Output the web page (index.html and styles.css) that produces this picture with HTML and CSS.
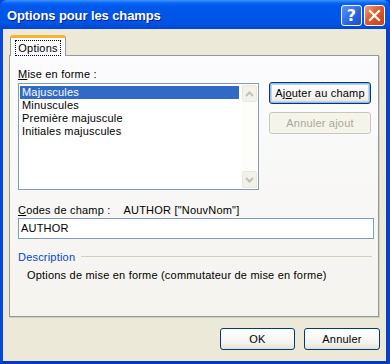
FILE: index.html
```html
<!DOCTYPE html>
<html lang="fr">
<head>
    <meta charset="UTF-8">
    <title>Options pour les champs</title>
    <link rel="stylesheet" href="styles.css">
</head>
<body>

<div class="window">
    <div class="titlebar">
        <span class="title">Options pour les champs</span>
        <div class="title-buttons">
            <div class="tbtn help">?</div>
            <div class="tbtn close">
                <svg width="13" height="13" viewBox="0 0 13 13">
                    <path d="M2 2 L11 11 M11 2 L2 11" stroke="#fff" stroke-width="2.2" stroke-linecap="square"/>
                </svg>
            </div>
        </div>
    </div>

    <div class="client">
        <div class="tabs">
            <div class="tab"><span class="focus">Options</span></div>
        </div>

        <div class="panel">
            <div class="label first"><u>M</u>ise en forme :</div>
            <div class="list-row">
                <div class="listbox">
                    <div class="items">
                        <div class="item selected">Majuscules</div>
                        <div class="item">Minuscules</div>
                        <div class="item">Première majuscule</div>
                        <div class="item">Initiales majuscules</div>
                    </div>
                    <div class="scrollbar">
                        <div class="sbtn">
                            <svg width="9" height="6" viewBox="0 0 9 6"><path d="M1 5 L4.5 1.5 L8 5" fill="none" stroke="#c3c1b5" stroke-width="2"/></svg>
                        </div>
                        <div class="track"></div>
                        <div class="sbtn">
                            <svg width="9" height="6" viewBox="0 0 9 6"><path d="M1 1 L4.5 4.5 L8 1" fill="none" stroke="#c3c1b5" stroke-width="2"/></svg>
                        </div>
                    </div>
                </div>
                <div class="side-buttons">
                    <div class="btn default wide">Aj<u>o</u>uter au champ</div>
                    <div class="btn disabled wide">Annuler ajout</div>
                </div>
            </div>

            <div class="label codes"><u>C</u>odes de champ :<span class="code-value">AUTHOR ["NouvNom"]</span></div>
            <div class="textbox">AUTHOR</div>

            <div class="group">
                <span class="group-title">Description</span>
                <span class="group-line"></span>
            </div>
            <div class="desc">Options de mise en forme (commutateur de mise en forme)</div>
        </div>

        <div class="footer">
            <div class="btn">OK</div>
            <div class="btn">Annuler</div>
        </div>
    </div>
</div>

</body>
</html>
```

FILE: styles.css
```css
body {
    margin: 0;
    padding: 0;
    background: #ece9d8;
    font-family: "Liberation Sans", Arial, sans-serif;
    font-size: 11px;
    letter-spacing: 0.2px;
    color: #000;
}
.window {
    width: 390px;
    height: 364px;
    box-sizing: border-box;
    display: flex;
    flex-direction: column;
    background: #0054e3;
    border-left: 3px solid #0848d8;
    border-right: 4px solid #0840c8;
    border-bottom: 3px solid #0838c0;
}
.titlebar {
    height: 29px;
    margin: 0 -4px 0 -3px;
    padding: 0 5px 0 7px;
    display: flex;
    align-items: center;
    justify-content: space-between;
    border-radius: 7px 7px 0 0;
    background: linear-gradient(#3d95ff 0px, #0a66f4 3px, #0058ee 6px, #0056e8 14px, #0055e5 22px, #0046d6 29px);
}
.title {
    color: #fff;
    font-weight: bold;
    font-size: 13px;
    letter-spacing: -0.1px;
    text-shadow: 1px 1px #0a1e8c;
    padding-top: 1px;
}
.title-buttons {
    display: flex;
    gap: 2px;
    padding-top: 1px;
}
.tbtn {
    width: 19px;
    height: 19px;
    border: 1px solid #fff;
    border-radius: 3px;
    display: flex;
    align-items: center;
    justify-content: center;
    color: #fff;
}
.help {
    background: linear-gradient(135deg, #5b93f8, #2a63de 60%, #1d4fc8);
    font-family: "DejaVu Sans", sans-serif;
    font-weight: bold;
    font-size: 16px;
}
.close {
    background: linear-gradient(135deg, #f0a080, #e05a2a 45%, #c8401a);
}
.client {
    flex: 1;
    background: #ece9d8;
    display: flex;
    flex-direction: column;
    padding: 7px 7px 0 6px;
}
.tabs {
    display: flex;
    padding-left: 1px;
    position: relative;
    z-index: 1;
    margin-bottom: -1px;
}
.tab {
    width: 54px;
    border: 1px solid #919b9c;
    border-bottom: none;
    border-top: 3px solid #f8b232;
    border-radius: 3px 3px 0 0;
    background: #fcfcfe;
    display: flex;
    align-items: center;
    justify-content: center;
    margin-top: -1px;
    height: 18px;
}
.focus {
    border: 1px dotted #000;
    padding: 1px 2px;
    margin-top: 1px;
}
.panel {
    height: 262px;
    box-sizing: border-box;
    border: 1px solid #919b9c;
    box-shadow: 1px 1px 0 #d0cec0;
    background: linear-gradient(#fcfcfe, #f4f3ee);
    padding: 0 7px 0 8px;
    display: flex;
    flex-direction: column;
}
.label {
    height: 13px;
    line-height: 13px;
}
.label.first {
    margin-top: 12px;
}
.list-row {
    display: flex;
    gap: 10px;
    margin-top: 2px;
}
.listbox {
    width: 240px;
    height: 105px;
    border: 1px solid #7f9db9;
    background: #fff;
    display: flex;
}
.items {
    flex: 1;
    padding: 2px 2px 0 1px;
}
.item {
    height: 13px;
    line-height: 13px;
    padding-left: 2px;
}
.item.selected {
    background: #316ac5;
    color: #fff;
}
.scrollbar {
    width: 17px;
    display: flex;
    flex-direction: column;
    background: #fdfdfa;
}
.sbtn {
    height: 15px;
    margin: 1px 1px 0 1px;
    border: 1px solid #e9e7de;
    border-radius: 2px;
    background: #f2f1ea;
    display: flex;
    align-items: center;
    justify-content: center;
}
.sbtn:last-child {
    margin: 0 1px 1px 1px;
}
.track {
    flex: 1;
}
.side-buttons {
    display: flex;
    flex-direction: column;
    gap: 8px;
    margin-top: -1px;
}
.btn {
    width: 73px;
    height: 20px;
    border: 1px solid #003c74;
    border-radius: 3px;
    background: linear-gradient(#ffffff, #f4f3ee 70%, #e3e1d6);
    display: flex;
    align-items: center;
    justify-content: center;
}
.btn.wide {
    width: 100px;
}
.btn.default {
    box-shadow: inset 0 0 0 1px #98b8ea, inset 0 0 0 2px #c0d4f4;
}
.btn.disabled {
    border-color: #c9c7ba;
    background: #f5f4ea;
    color: #aca899;
}
.label.codes {
    margin-top: 14px;
}
.code-value {
    margin-left: 13px;
}
.textbox {
    height: 19px;
    line-height: 19px;
    margin-top: 1px;
    width: 352px;
    border: 1px solid #7f9db9;
    background: #fff;
    padding-left: 2px;
}
.group {
    display: flex;
    align-items: center;
    margin-top: 11px;
    height: 13px;
    width: 354px;
}
.group-title {
    color: #0046d5;
}
.group-line {
    flex: 1;
    height: 1px;
    background: #d0d0bf;
    margin-left: 6px;
}
.desc {
    margin-top: 6px;
    margin-left: 9px;
    height: 13px;
    line-height: 13px;
}
.footer {
    display: flex;
    justify-content: flex-end;
    gap: 9px;
    margin-top: 11px;
    margin-right: -1px;
}
.footer .btn:last-child {
    width: 74px;
}
```
